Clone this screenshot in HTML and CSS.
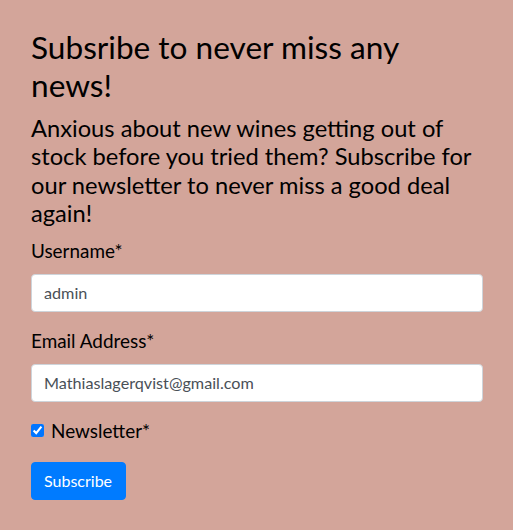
FILE: index.html
```html
<!DOCTYPE html>
<html>
<head>
<meta charset="utf-8">
<link rel="stylesheet" href="styles.css">
</head>
<body>
<div class="box">
  <h2 class="title">Subsribe to never miss any news!</h2>
  <h4 class="lead">Anxious about new wines getting out of stock before you tried them? Subscribe for our newsletter to never miss a good deal again!</h4>
  <form class="form">
    <div class="group">
      <label class="label">Username*</label>
      <input class="control" type="text" value="admin">
    </div>
    <div class="group">
      <label class="label">Email Address*</label>
      <input class="control" type="text" value="Mathiaslagerqvist@gmail.com">
    </div>
    <div class="check">
      <input class="checkbox" type="checkbox" checked>
      <label class="label check-label">Newsletter*</label>
    </div>
    <button class="btn" type="button">Subscribe</button>
  </form>
</div>
</body>
</html>
```
FILE: styles.css
```css
html, body {
  margin: 0;
  padding: 0;
  background: #ffffff;
}
body {
  font-family: Lato, "Noto Sans", sans-serif;
  font-size: 16px;
  line-height: 1.5;
  color: #212529;
}
.box {
  width: 452px;
  padding: 29px 30px 30px 31px;
  background: #d3a59a;
  min-height: 471px;
}
.title {
  font-size: 31.6px;
  font-weight: 400;
  line-height: 1.2;
  margin: 0 0 9px;
  color: #000;
}
.lead {
  font-size: 23.7px;
  font-weight: 400;
  line-height: 1.2;
  margin: 0 0 10px;
  color: #000;
}
.group {
  margin-bottom: 16px;
}
.label {
  display: inline-block;
  font-size: 18.9px;
  line-height: 25px;
  margin-bottom: 11px;
  color: #000;
}
.control {
  display: block;
  box-sizing: border-box;
  width: 100%;
  height: 38px;
  padding: 6px 12px;
  font-family: Lato, "Noto Sans", sans-serif;
  font-size: 16.2px;
  line-height: 1.5;
  color: #495057;
  background: #fff;
  border: 1px solid #ced4da;
  border-radius: 4px;
  margin: 0;
}
.check {
  display: flex;
  align-items: center;
  gap: 7px;
  margin-bottom: 19px;
}
.checkbox {
  margin: 0;
  width: 13px;
  height: 13px;
}
.check-label {
  margin-bottom: 0;
}
.btn {
  box-sizing: border-box;
  height: 38px;
  font-family: Lato, "Noto Sans", sans-serif;
  font-size: 16px;
  line-height: 24px;
  padding: 6px 13px 6px 12px;
  color: #fff;
  background: #007bff;
  border: 1px solid #007bff;
  border-radius: 4px;
}
```
